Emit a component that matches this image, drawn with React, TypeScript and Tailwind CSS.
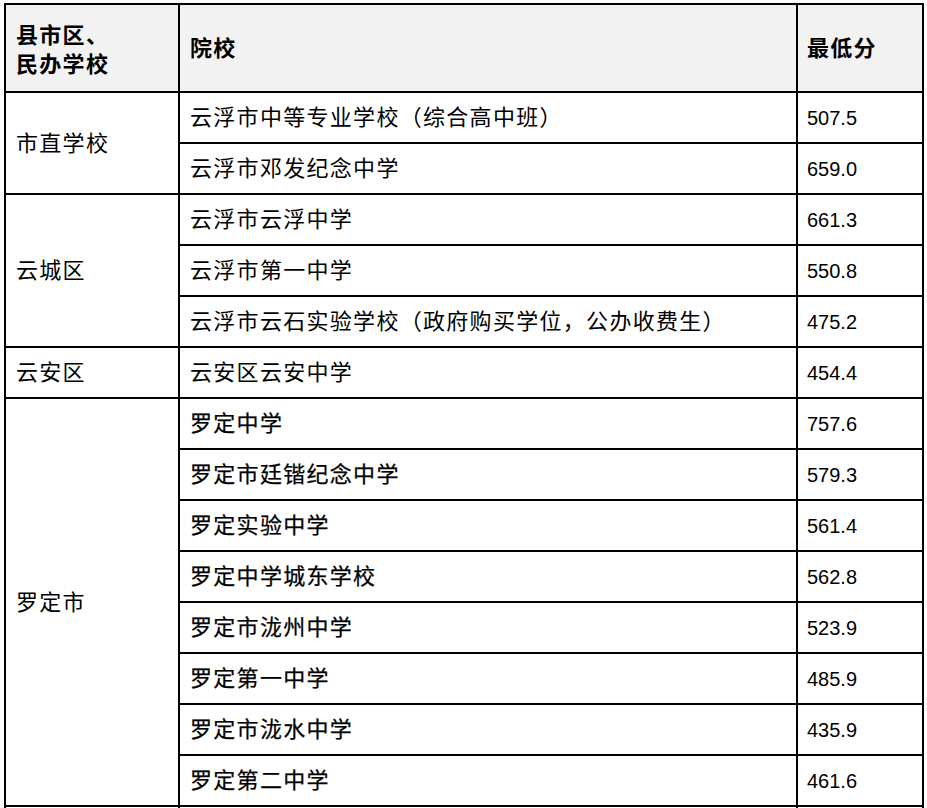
const groups = [
  {
    area: '市直学校',
    rows: [
      { name: '云浮市中等专业学校（综合高中班）', score: '507.5' },
      { name: '云浮市邓发纪念中学', score: '659.0' },
    ],
  },
  {
    area: '云城区',
    rows: [
      { name: '云浮市云浮中学', score: '661.3' },
      { name: '云浮市第一中学', score: '550.8' },
      { name: '云浮市云石实验学校（政府购买学位，公办收费生）', score: '475.2' },
    ],
  },
  {
    area: '云安区',
    rows: [{ name: '云安区云安中学', score: '454.4' }],
  },
  {
    area: '罗定市',
    bold: true,
    rows: [
      { name: '罗定中学', score: '757.6' },
      { name: '罗定市廷锴纪念中学', score: '579.3' },
      { name: '罗定实验中学', score: '561.4' },
      { name: '罗定中学城东学校', score: '562.8' },
      { name: '罗定市泷州中学', score: '523.9' },
      { name: '罗定第一中学', score: '485.9' },
      { name: '罗定市泷水中学', score: '435.9' },
      { name: '罗定第二中学', score: '461.6' },
    ],
  },
]

const cjk = "font-['Liberation_Sans','Noto_Sans_CJK_SC',sans-serif] text-[22px] tracking-[1.3px] text-black"
const num = "font-['Liberation_Sans','Noto_Sans_CJK_SC',sans-serif] text-[20px] text-black"

export default function App() {
  return (
    <div className="h-screen bg-white pl-[4px] pt-[3px] overflow-hidden">
      <table className="table-fixed border-collapse w-[918px]">
        <colgroup>
          <col className="w-[174px]" />
          <col className="w-[618px]" />
          <col className="w-[126px]" />
        </colgroup>
        <thead>
          <tr className="h-[88px] bg-[#f2f2f2]">
            <th className={`${cjk} border-2 border-black text-left font-bold leading-[29px] pl-[10px] pt-[3px]`}>
              县市区、
              <br />
              民办学校
            </th>
            <th className={`${cjk} border-2 border-black text-left font-bold pl-[10px]`}>院校</th>
            <th className={`${cjk} border-2 border-black text-left font-bold pl-[9px]`}>最低分</th>
          </tr>
        </thead>
        <tbody>
          {groups.map((g) =>
            g.rows.map((r, i) => (
              <tr key={g.area + i} className="h-[51px]">
                {i === 0 && (
                  <td rowSpan={g.rows.length} className={`${cjk} border-2 border-black pl-[10px] align-middle`}>
                    {g.area}
                  </td>
                )}
                <td
                  className={`${cjk} border-2 border-black pl-[10px] ${
                    g.bold ? '[-webkit-text-stroke:0.25px_black]' : ''
                  }`}
                >
                  {r.name}
                </td>
                <td className={`${num} border-2 border-black pl-[9px]`}>{r.score}</td>
              </tr>
            ))
          )}
          {/* next group, cut off by the frame */}
          <tr className="h-[51px]">
            <td className="border-2 border-black" />
            <td className="border-2 border-black" />
            <td className="border-2 border-black" />
          </tr>
        </tbody>
      </table>
    </div>
  )
}
